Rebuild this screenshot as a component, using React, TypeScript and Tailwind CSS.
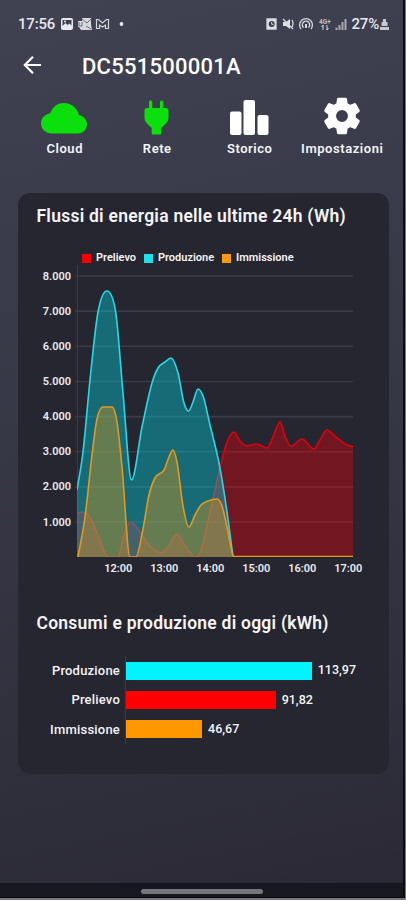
import React from 'react';

type Point = [number, number];

const TICKS = [8000, 7000, 6000, 5000, 4000, 3000, 2000, 1000];
const HOURS = ['12:00', '13:00', '14:00', '15:00', '16:00', '17:00'];

const LEGEND = [
  { label: 'Prelievo', color: 'bg-[#f80000]', width: 'w-[62px]' },
  { label: 'Produzione', color: 'bg-[#1fe0ee]', width: 'w-[78px]' },
  { label: 'Immissione', color: 'bg-[#f99a12]', width: 'w-[76px]' },
];

const TOTALS = [
  { label: 'Produzione', value: 113.97, color: 'bg-[#00f3ff]' },
  { label: 'Prelievo', value: 91.82, color: 'bg-[#ff0000]' },
  { label: 'Immissione', value: 46.67, color: 'bg-[#ff9800]' },
];

const PRODUZIONE: Point[] = [
  [40, 241], [46, 203], [53, 131], [61, 63], [70, 42], [78.5, 62], [86, 144], [94.5, 231],
  [105, 178], [115, 134], [121, 119], [128, 113], [134, 109], [141, 124], [147, 154],
  [151.5, 162], [156, 153], [161, 140], [166, 147], [173, 176], [182, 214], [189, 256], [196, 307.5],
];

const IMMISSIONE: Point[] = [
  [41, 308], [48, 268], [55, 206], [60, 170], [66, 158], [75, 158], [80, 173], [85, 218], [93, 308],
  [99, 308], [106, 280], [112, 246], [118, 229], [127, 221], [132, 208], [136, 201], [140, 213],
  [146, 257], [152, 278], [158, 266], [164, 256], [171, 252], [180, 250], [185, 257], [190, 278], [197, 307.5],
  [316, 307.5],
];

const PRELIEVO: Point[] = [
  [40, 265], [45, 263], [54, 270], [62, 289], [71, 308], [81, 308], [87, 286], [94, 273], [101, 280],
  [111, 295], [124, 304], [131, 298], [140, 285], [148, 297], [158, 308], [163, 304], [170, 277],
  [180, 232], [189, 196], [197, 183], [203, 192], [210, 197], [220, 195], [230, 199], [236, 188],
  [243, 173], [249, 190], [254, 197], [265, 190], [277, 200], [283, 191], [290, 181], [299, 188], [308, 195], [316, 198],
];

// curva monotona: non supera mai i punti dati
function linePath(p: Point[]) {
  const n = p.length;
  const d = p.slice(1).map((q, i) => (q[1] - p[i][1]) / (q[0] - p[i][0]));
  const m = p.map((_, i) => {
    if (i === 0) return d[0];
    if (i === n - 1) return d[n - 2];
    if (d[i - 1] * d[i] <= 0) return 0;
    const avg = (d[i - 1] + d[i]) / 2;
    const max = 2.5 * Math.min(Math.abs(d[i - 1]), Math.abs(d[i]));
    return Math.sign(avg) * Math.min(Math.abs(avg), max);
  });
  let out = `M${p[0][0]},${p[0][1]}`;
  for (let i = 1; i < n; i++) {
    const h = (p[i][0] - p[i - 1][0]) / 3;
    out += `C${p[i - 1][0] + h},${p[i - 1][1] + m[i - 1] * h} ${p[i][0] - h},${p[i][1] - m[i] * h} ${p[i][0]},${p[i][1]}`;
  }
  return out;
}

type SerieProps = { points: Point[]; stroke: string; fill: string; opacity: number };

function Serie({ points, stroke, fill, opacity }: SerieProps) {
  const line = linePath(points);
  const last = points[points.length - 1];
  return (
    <g clipPath="url(#plot)">
      <path d={`${line}L${last[0]},308L${points[0][0]},308Z`} fill={fill} fillOpacity={opacity} />
      <path d={line} fill="none" stroke={stroke} strokeWidth="1.6" />
    </g>
  );
}

function EnergyChart() {
  return (
    <svg width="352" height="330" viewBox="0 0 352 330" className="block font-['Roboto',sans-serif]">
      <clipPath id="plot">
        <rect x="40" y="10" width="277" height="298" />
      </clipPath>
      {TICKS.map((t, i) => (
        <g key={t}>
          <line x1="38" x2="316" y1={27 + i * 35.15} y2={27 + i * 35.15} stroke="#3b3b45" strokeWidth="1.6" />
          <text x="34" y={30.5 + i * 35.15} textAnchor="end" fontSize="11" fontWeight="600" fill="#ececf0">
            {t / 1000}.000
          </text>
        </g>
      ))}
      <line x1="40.5" x2="40.5" y1="16" y2="308" stroke="#3b3b45" />
      <Serie points={PRELIEVO} stroke="#e0000c" fill="#f0000c" opacity={0.38} />
      <Serie points={PRODUZIONE} stroke="#29d8e8" fill="#00d4e0" opacity={0.4} />
      <Serie points={IMMISSIONE} stroke="#e39a1c" fill="#f29a12" opacity={0.36} />
      {HOURS.map((h, i) => (
        <text key={h} x={81.2 + i * 46} y="323" textAnchor="middle" fontSize="11" fontWeight="600" fill="#ececf0">
          {h}
        </text>
      ))}
    </svg>
  );
}

function StatusBar() {
  return (
    <div className="flex h-[48px] items-center pl-[18px] pr-[14px] text-[15px] font-medium text-[#e8e8ee]">
      <span className="w-[42px] tracking-[-0.2px]">17:56</span>
      <svg width="66" height="14" viewBox="0 0 66 14" fill="#e8e8ee">
        <path fillRule="evenodd" d="M3 1h8a2 2 0 0 1 2 2v8a2 2 0 0 1-2 2H3a2 2 0 0 1-2-2V3a2 2 0 0 1 2-2Zm-.5 2v6L5.500 6l2 2 2-1.500L11.500 8.500V3Z" />
        <circle cx="5" cy="4.500" r="1" />
        <path d="M22 1h9v6l1 6H21l-2-3h-1V4h4Z" opacity=".9" />
        <path d="m22 2 5 4 4-4M19 5v4h3V5M26 9l5 3" fill="none" stroke="#6a6b79" strokeWidth="1" />
        <path d="M36.500 11.500v-9h2l4 3.500 4-3.500h2v9h-3V8l-3 2-3-2v3.500Z" fill="none" stroke="#d5d5dc" strokeWidth="1.200" />
        <circle cx="61.500" cy="7" r="1.900" />
      </svg>
      <div className="flex-1" />
      <svg width="82" height="14" viewBox="0 0 82 14" fill="none" stroke="#d8d8df" strokeWidth="1.300">
        <path d="M1 2h9v10H1Z" fill="#e0e0e6" />
        <circle cx="5.700" cy="7" r="3" fill="#3b3c49" stroke="none" />
        <path d="M5.700 5v2.300h2" strokeWidth="1" />
        <path d="M17 5h3l4-3v10l-4-3h-3Z" fill="#e0e0e6" stroke="none" />
        <path d="m17 2 10 10M26 3q2 4 0 7" />
        <path d="M35 12a6.400 6.400 0 1 1 10 0M37.500 10.500a3.700 3.700 0 1 1 5 0" />
        <path d="M40 7v4" strokeWidth="2" />
        <text x="53" y="6.500" fontSize="6.500" fontWeight="700" fill="#c0c0c8" stroke="none">4G+</text>
        <path d="M57 13V8l-1.500 2M61 8v5l1.500-2" strokeWidth="1" />
        <path d="M70.500 13v-2.500M73.500 13V8M76.500 13V5M79.500 13V2" stroke="#a8a9b2" strokeWidth="2" />
      </svg>
      <span className="ml-[4px] tracking-[-0.2px]">27%</span>
      <svg width="9" height="13" viewBox="0 0 9 13" fill="#c8c8ce" className="ml-px">
        <path d="M3 1h3v3h1.500v4H1.500V4H3ZM0 9h9v3H0Z" />
      </svg>
    </div>
  );
}

function CloudIcon() {
  return (
    <svg width="46" height="32" viewBox="0 0 46 32" fill="#0be00c">
      <path d="M11 31.500C5 31.500 0 27.200 0 21.500c0-5.200 4-9.500 9.300-10.200C11.500 5 16.500 1 23 1c7.500 0 13.500 5 15 12.200 4.600.6 8 4.400 8 9 0 5.200-4 9.300-9 9.300Z" />
    </svg>
  );
}

function PlugIcon() {
  return (
    <svg width="25" height="35" viewBox="0 0 25 35" fill="#0be00c">
      <path d="M5 2q0-1.500 1.600-1.500T8.300 2v6H16V2q0-1.500 1.700-1.500T19.300 2v6H22q2.500 0 2.500 2.500v7.500q0 3.500-2.500 5.500l-4.700 4.600v5q0 1.500-1.500 1.500H9.200q-1.500 0-1.500-1.500v-5L3 23.500Q.5 21.500.5 18v-7.500Q.5 8 3 8H5Z" />
    </svg>
  );
}

function BarsIcon() {
  return (
    <svg width="39" height="35" viewBox="0 0 39 35" fill="#fff">
      <rect x="0" y="11.500" width="11.500" height="23.500" rx="2" />
      <rect x="13.500" y="0" width="11.500" height="35" rx="2" />
      <rect x="27.500" y="15" width="11" height="20" rx="2" />
    </svg>
  );
}

function GearIcon() {
  return (
    <svg width="44" height="44" viewBox="0 0 24 24" fill="#fff" stroke="#fff" strokeWidth="0.7" strokeLinejoin="round" className="-mt-[4px]">
      <path d="M19.140 12.940c.04-.3.060-.61.060-.94 0-.32-.02-.64-.07-.94l2.030-1.580c.18-.14.23-.41.120-.61l-1.920-3.320c-.12-.22-.37-.29-.59-.22l-2.390.96c-.5-.38-1.030-.7-1.620-.94l-.36-2.540c-.04-.24-.24-.41-.48-.41h-3.840c-.24 0-.43.17-.47.41l-.36 2.540c-.59.24-1.130.57-1.620.94l-2.390-.96c-.22-.08-.47 0-.59.22L2.740 8.870c-.12.21-.08.47.12.61l2.030 1.580c-.05.3-.09.63-.09.94s.02.64.07.94l-2.030 1.580c-.18.14-.23.41-.12.61l1.920 3.320c.12.22.37.29.59.22l2.390-.96c.5.38 1.030.7 1.620.94l.36 2.540c.05.24.24.41.48.41h3.840c.24 0 .44-.17.47-.41l.36-2.540c.59-.24 1.130-.56 1.620-.94l2.390.96c.22.08.47 0 .59-.22l1.920-3.320c.12-.22.07-.47-.12-.61l-2.010-1.580zM12 15.600c-1.980 0-3.600-1.620-3.600-3.600s1.620-3.600 3.600-3.600 3.600 1.620 3.600 3.600-1.620 3.600-3.600 3.600z" />
    </svg>
  );
}

const MENU = [
  { label: 'Cloud', icon: <CloudIcon /> },
  { label: 'Rete', icon: <PlugIcon /> },
  { label: 'Storico', icon: <BarsIcon /> },
  { label: 'Impostazioni', icon: <GearIcon /> },
];

export default function App() {
  return (
    <div className="h-[900px] w-[406px] overflow-hidden bg-[#77777c] pb-[2px] pr-px font-['Roboto',sans-serif]">
      <div className="flex h-[898px] w-[405px] flex-col border-b border-r-2 border-[#0c0c14] bg-[linear-gradient(168deg,#404151_0%,#373846_45%,#2b2936_100%)]">
        <StatusBar />

        <header className="flex h-[36px] items-center pl-[23px] text-white">
          <svg width="19" height="20" viewBox="0 0 19 20" fill="none" stroke="#fff" strokeWidth="2.200" className="-mt-[2px]">
            <path d="M18 10H2M10 1.800 1.800 10l8.200 8.200" />
          </svg>
          <h1 className="ml-[40px] text-[22px] font-medium tracking-[0.25px]">DC551500001A</h1>
        </header>

        <nav className="flex h-[109px] pl-[18px] pt-[8px]">
          {MENU.map((item) => (
            <div key={item.label} className="flex w-[92.500px] flex-col items-center">
              <div className="flex h-[48px] items-center justify-center pt-[3px]">{item.icon}</div>
              <span className="pl-px text-[13px] font-semibold leading-[18px] tracking-[0.550px] text-[#f4f4f8]">{item.label}</span>
            </div>
          ))}
        </nav>

        <main className="ml-[18px] h-[581px] w-[371px] rounded-[12px] bg-[#262630] text-[#f4f4f8]">
          <h2 className="pl-[18.500px] pt-[11px] text-[17.500px] font-semibold leading-[24px] tracking-[0.240px]">
            Flussi di energia nelle ultime 24h (Wh)
          </h2>
          <div className="mt-[23px] flex h-[14px] items-center pl-[64px] text-[11px] font-semibold">
            {LEGEND.map((l) => (
              <div key={l.label} className={`flex items-center gap-[5px] ${l.width}`}>
                <span className={`size-[9px] shrink-0 ${l.color}`} />
                <span>{l.label}</span>
              </div>
            ))}
          </div>
          <div className="-mt-[16px] pl-[19px]">
            <EnergyChart />
          </div>

          <h2 className="mt-[32px] pl-[18.500px] text-[17.500px] font-semibold leading-[24px] tracking-[0.240px]">
            Consumi e produzione di oggi (kWh)
          </h2>
          <div className="mt-[21px] flex text-[12.500px] font-medium">
            <div className="w-[107px] pr-[5px] text-right text-[13px] tracking-[0.200px]">
              {TOTALS.map((t) => (
                <div key={t.label} className="h-[29.300px] leading-[29.300px]">{t.label}</div>
              ))}
            </div>
            <div className="border-l border-[#3b3b45]">
              {TOTALS.map((t) => (
                <div key={t.label} className="flex h-[29.300px] items-center gap-[6px]">
                  <div className={`h-[18px] ${t.color}`} style={{ width: t.value * 1.63 }} />
                  <span>{t.value.toFixed(2).replace('.', ',')}</span>
                </div>
              ))}
            </div>
          </div>
        </main>

        <div className="mt-auto flex h-[14px] items-center justify-center bg-[#17171f] pt-[2px]">
          <div className="h-[5px] w-[122px] rounded-full bg-[#77777b]" />
        </div>
      </div>
    </div>
  );
}
